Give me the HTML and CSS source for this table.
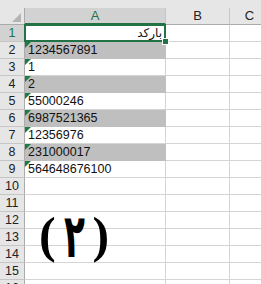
FILE: index.html
```html
<!DOCTYPE html>
<html>
<head>
<meta charset="utf-8">
<link rel="stylesheet" href="styles.css">
</head>
<body>
<div class="sheet">
  <div class="topstrip"></div>
  <div class="grid">
    <div class="corner"><span class="tri"></span></div>
    <div class="colh sel">A</div>
    <div class="colh">B</div>
    <div class="colh last">C</div>

    <div class="rowh sel">1</div><div class="cell rtl">بارکد</div><div class="cell"></div><div class="cell last"></div>
    <div class="rowh">2</div><div class="cell fill flag">1234567891</div><div class="cell"></div><div class="cell last"></div>
    <div class="rowh">3</div><div class="cell flag">1</div><div class="cell"></div><div class="cell last"></div>
    <div class="rowh">4</div><div class="cell fill flag">2</div><div class="cell"></div><div class="cell last"></div>
    <div class="rowh">5</div><div class="cell flag">55000246</div><div class="cell"></div><div class="cell last"></div>
    <div class="rowh">6</div><div class="cell fill flag">6987521365</div><div class="cell"></div><div class="cell last"></div>
    <div class="rowh">7</div><div class="cell flag">12356976</div><div class="cell"></div><div class="cell last"></div>
    <div class="rowh">8</div><div class="cell fill flag">231000017</div><div class="cell"></div><div class="cell last"></div>
    <div class="rowh">9</div><div class="cell flag">564648676100</div><div class="cell"></div><div class="cell last"></div>
    <div class="rowh">10</div><div class="cell"></div><div class="cell"></div><div class="cell last"></div>
    <div class="rowh">11</div><div class="cell"></div><div class="cell"></div><div class="cell last"></div>
    <div class="rowh">12</div><div class="cell"></div><div class="cell"></div><div class="cell last"></div>
    <div class="rowh">13</div><div class="cell"></div><div class="cell"></div><div class="cell last"></div>
    <div class="rowh">14</div><div class="cell"></div><div class="cell"></div><div class="cell last"></div>
    <div class="rowh">15</div><div class="cell"></div><div class="cell"></div><div class="cell last"></div>
    <div class="rowh">16</div><div class="cell"></div><div class="cell"></div><div class="cell last"></div>
  </div>
  <div class="selection"><span class="handle"></span></div>
  <div class="bigtext"><span class="paren">(</span><span class="digit">٢</span><span class="paren">)</span></div>
</div>
</body>
</html>
```

FILE: styles.css
```css
html, body {
  margin: 0;
  padding: 0;
  background: #ffffff;
}
.sheet {
  position: relative;
  width: 261px;
  height: 284px;
  overflow: hidden;
  font-family: "Liberation Sans", Arial, sans-serif;
}
.topstrip {
  height: 8px;
  background: #e6e6e6;
}
.grid {
  display: grid;
  grid-template-columns: 25px 141px 64px 40px;
  grid-template-rows: 17px repeat(16, 17px);
}
.corner {
  background: #e6e6e6;
  border-right: 1px solid #ababab;
  border-bottom: 1px solid #ababab;
  position: relative;
}
.tri {
  position: absolute;
  right: 3px;
  bottom: 2px;
  width: 0;
  height: 0;
  border-left: 9px solid transparent;
  border-bottom: 9px solid #b4b4b4;
}
.colh {
  background: #e6e6e6;
  border-right: 1px solid #c6c6c6;
  border-bottom: 1px solid #ababab;
  color: #222222;
  font-size: 13px;
  line-height: 16px;
  text-align: center;
}
.colh.sel {
  background: #d2d2d2;
  color: #217346;
  border-bottom: 2px solid #217346;
  line-height: 15px;
}
.rowh {
  background: #e6e6e6;
  border-right: 1px solid #ababab;
  border-bottom: 1px solid #c6c6c6;
  color: #222222;
  font-size: 12.5px;
  line-height: 17px;
  text-align: center;
}
.rowh.sel {
  background: #d2d2d2;
  color: #217346;
}
.cell {
  border-right: 1px solid #d4d4d4;
  border-bottom: 1px solid #d4d4d4;
  font-size: 12.5px;
  line-height: 17px;
  color: #111111;
  padding-left: 3px;
  white-space: nowrap;
  position: relative;
}
.cell.last {
  border-right: none;
}
.cell.rtl {
  direction: rtl;
  text-align: right;
  padding-left: 0;
  padding-right: 3px;
  font-family: "DejaVu Sans", sans-serif;
  font-size: 12px;
}
.cell.fill {
  background: #bfbfbf;
  border-color: #bfbfbf;
}
.cell.flag::before {
  content: "";
  position: absolute;
  left: 0;
  top: 0;
  width: 0;
  height: 0;
  border-top: 6px solid #1e7b45;
  border-right: 6px solid transparent;
}
.selection {
  position: absolute;
  left: 24px;
  top: 24px;
  width: 138px;
  height: 14px;
  border: 2px solid #217346;
}
.handle {
  position: absolute;
  right: -5px;
  bottom: -5px;
  width: 5px;
  height: 5px;
  background: #217346;
  border: 1px solid #ffffff;
}
.bigtext {
  position: absolute;
  left: 34px;
  top: 208px;
  font-family: "DejaVu Sans", sans-serif;
  font-weight: bold;
  font-size: 44px;
  line-height: 54px;
  color: #000000;
  white-space: nowrap;
}
.paren {
  font-family: "Liberation Serif", serif;
  font-size: 50px;
  margin: 0 5px;
}
.digit {
  display: inline-block;
  transform: translateY(-1px) scale(0.78, 1.37);
}
```
